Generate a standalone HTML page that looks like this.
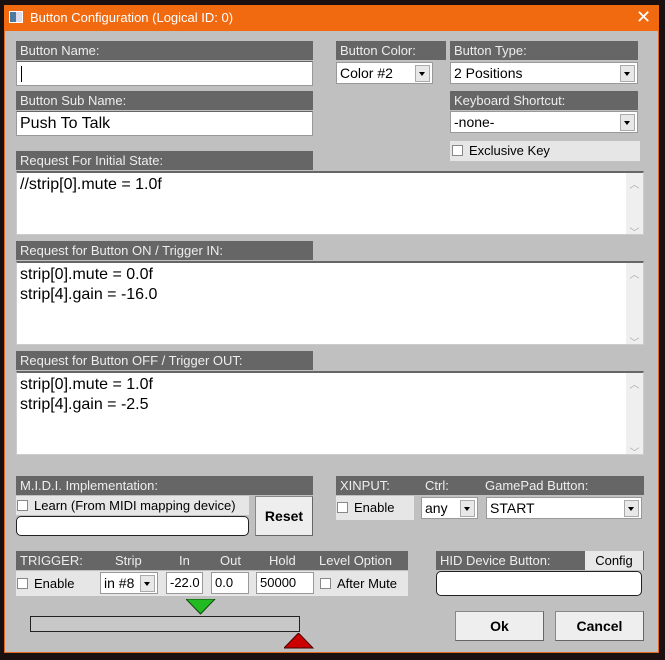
<!DOCTYPE html>
<html><head><meta charset="utf-8"><style>
*{box-sizing:border-box;margin:0;padding:0}
body{width:665px;height:660px;background:#1a1010;position:relative;overflow:hidden;font-family:"Liberation Sans",sans-serif;font-size:13px;color:#000}
.a{position:absolute}
.win{left:4px;top:5px;width:655px;height:648px;background:#c0c0c0;border:1px solid #e06a20}
.title{left:4px;top:5px;width:655px;height:26px;background:#f26a10;color:#fff;font-size:13px;line-height:26px;padding-left:26px}
.lbl{background:#666;color:#eee;font-size:13px;line-height:19px;height:19px;padding-left:4px}
.inp{background:#fff;border:1px solid #999;border-top-color:#666}
.sel{background:#fff;border:1px solid #999;font-size:14px;line-height:20px;padding-left:3px}
.arr{position:absolute;right:2px;top:2px;width:15px;height:17px;background:#e8e8e8;border:1px solid #aaa}
.arr:after{content:"";position:absolute;left:3px;top:6px;border:3px solid transparent;border-top:4px solid #000}
.lt{background:#e6e6e6}
.cb{display:inline-block;width:11px;height:11px;background:#fff;border:1px solid #888;vertical-align:-1px;margin-right:6px}
.ta{background:#fff;border:1px solid #ccc;border-top:2px solid #666;font-size:16px;line-height:20px;padding:2px 0 0 3px}
.sb{position:absolute;right:0;top:0;bottom:0;width:17px;background:#efefef;color:#aaa;font-size:10px;text-align:center}
.btn{background:#eee;border:1px solid #888;border-right-color:#666;border-bottom-color:#666;font-weight:bold;font-size:14px;text-align:center}
.rnd{background:#fff;border:1px solid #222;border-radius:5px}
</style></head><body>
<div class="a win"></div>
<div class="a title">Button Configuration (Logical ID: 0)</div>
<div class="a" style="left:9px;top:11px;width:14px;height:12px;background:#dde;border:1px solid #fff"><div style="width:6px;height:10px;background:#4a7aa0"></div></div>
<div class="a" style="left:636px;top:7px;color:#fff;font-size:18px">✕</div>

<div class="a lbl" style="left:16px;top:41px;width:297px">Button Name:</div>
<div class="a inp" style="left:16px;top:61px;width:297px;height:25px"><div style="position:absolute;left:4px;top:4px;width:1px;height:16px;background:#000"></div></div>
<div class="a lbl" style="left:16px;top:91px;width:297px">Button Sub Name:</div>
<div class="a inp" style="left:16px;top:111px;width:297px;height:25px;font-size:16px;line-height:23px;padding-left:3px">Push To Talk</div>

<div class="a lbl" style="left:336px;top:41px;width:110px">Button Color:</div>
<div class="a sel" style="left:336px;top:62px;width:97px;height:22px">Color #2<div class="arr"></div></div>
<div class="a lbl" style="left:450px;top:41px;width:188px">Button Type:</div>
<div class="a sel" style="left:450px;top:62px;width:188px;height:22px">2 Positions<div class="arr"></div></div>
<div class="a lbl" style="left:450px;top:91px;width:188px">Keyboard Shortcut:</div>
<div class="a sel" style="left:450px;top:111px;width:188px;height:22px">-none-<div class="arr"></div></div>
<div class="a lt" style="left:450px;top:141px;width:190px;height:20px;line-height:20px;padding-left:2px"><span class="cb"></span>Exclusive Key</div>

<div class="a lbl" style="left:16px;top:151px;width:297px">Request For Initial State:</div>
<div class="a ta" style="left:16px;top:171px;width:628px;height:64px">//strip[0].mute = 1.0f<div class="sb"><div style="margin-top:3px">︿</div><div style="margin-top:28px">﹀</div></div></div>
<div class="a lbl" style="left:16px;top:241px;width:297px">Request for Button ON / Trigger IN:</div>
<div class="a ta" style="left:16px;top:261px;width:628px;height:84px">strip[0].mute = 0.0f<br>strip[4].gain = -16.0<div class="sb"><div style="margin-top:3px">︿</div><div style="margin-top:48px">﹀</div></div></div>
<div class="a lbl" style="left:16px;top:351px;width:297px">Request for Button OFF / Trigger OUT:</div>
<div class="a ta" style="left:16px;top:371px;width:628px;height:84px">strip[0].mute = 1.0f<br>strip[4].gain = -2.5<div class="sb"><div style="margin-top:3px">︿</div><div style="margin-top:48px">﹀</div></div></div>

<div class="a lbl" style="left:16px;top:476px;width:297px">M.I.D.I. Implementation:</div>
<div class="a lt" style="left:16px;top:496px;width:233px;height:19px;line-height:19px;padding-left:1px"><span class="cb"></span>Learn (From MIDI mapping device)</div>
<div class="a rnd" style="left:16px;top:516px;width:233px;height:20px"></div>
<div class="a btn" style="left:255px;top:496px;width:58px;height:40px;line-height:38px">Reset</div>

<div class="a lbl" style="left:336px;top:476px;width:308px">XINPUT:<span style="position:absolute;left:89px">Ctrl:</span><span style="position:absolute;left:149px">GamePad Button:</span></div>
<div class="a lt" style="left:336px;top:496px;width:78px;height:24px;line-height:24px;padding-left:1px"><span class="cb"></span>Enable</div>
<div class="a sel" style="left:421px;top:497px;width:57px;height:22px">any<div class="arr"></div></div>
<div class="a sel" style="left:486px;top:497px;width:156px;height:22px">START<div class="arr"></div></div>

<div class="a lbl" style="left:16px;top:551px;width:392px">TRIGGER:<span style="position:absolute;left:99px">Strip</span><span style="position:absolute;left:163px">In</span><span style="position:absolute;left:204px">Out</span><span style="position:absolute;left:253px">Hold</span><span style="position:absolute;left:303px">Level Option</span></div>
<div class="a lt" style="left:16px;top:571px;width:392px;height:25px"></div>
<div class="a" style="left:17px;top:576px;line-height:15px"><span class="cb"></span>Enable</div>
<div class="a sel" style="left:100px;top:572px;width:58px;height:22px">in #8<div class="arr"></div></div>
<div class="a sel" style="left:166px;top:572px;width:37px;height:22px;font-size:13px">-22.0</div>
<div class="a sel" style="left:211px;top:572px;width:38px;height:22px;font-size:13px">0.0</div>
<div class="a sel" style="left:256px;top:572px;width:58px;height:22px;font-size:13px">50000</div>
<div class="a" style="left:320px;top:576px;line-height:15px"><span class="cb"></span>After Mute</div>

<div class="a lbl" style="left:436px;top:551px;width:208px">HID Device Button:</div>
<div class="a" style="left:585px;top:551px;width:58px;height:19px;background:#e8e8e8;text-align:center;line-height:19px">Config</div>
<div class="a rnd" style="left:436px;top:571px;width:206px;height:25px"></div>

<svg class="a" style="left:186px;top:599px" width="30" height="16"><polygon points="0,0 29,0 14.5,15" fill="#22bb22" stroke="#114411"/></svg>
<div class="a" style="left:30px;top:616px;width:270px;height:16px;background:#c8c8c8;border:1px solid #222"></div>
<svg class="a" style="left:284px;top:633px" width="30" height="16"><polygon points="0,15 29,15 14.5,0" fill="#cc0000" stroke="#440000"/></svg>

<div class="a btn" style="left:455px;top:611px;width:89px;height:30px;line-height:28px">Ok</div>
<div class="a btn" style="left:555px;top:611px;width:89px;height:30px;line-height:28px">Cancel</div>
</body></html>
